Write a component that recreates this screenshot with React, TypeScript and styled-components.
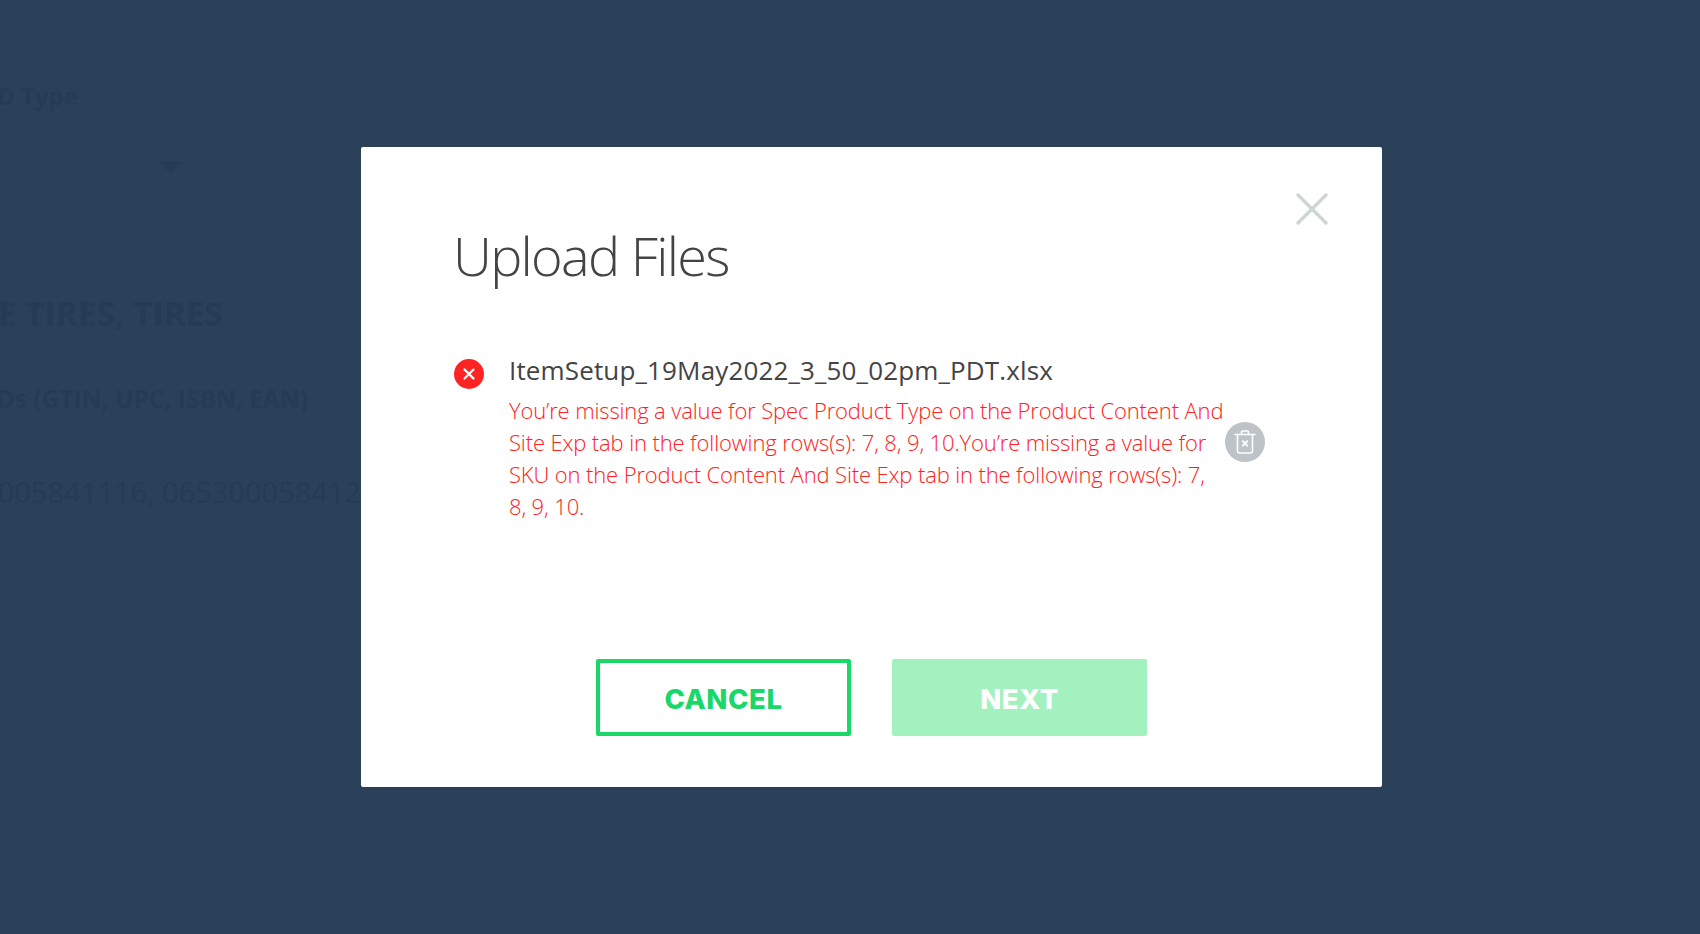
import React from 'react';
import styled, { createGlobalStyle } from 'styled-components';
import { X } from 'lucide-react';

const GlobalStyle = createGlobalStyle`
  html, body {
    margin: 0;
    padding: 0;
    height: 100%;
    overflow: hidden;
    background: #2b4159;
    font-family: "Open Sans", "Liberation Sans", sans-serif;
  }
`;

const Page = styled.div`
  position: relative;
  width: 1700px;
  height: 934px;
  overflow: hidden;
  background: #2b4159;
  color: #243c54;
`;

const PageContent = styled.div`
  display: flex;
  flex-direction: column;
  padding-top: 80px;
`;

const ClippedRow = styled.div<{ $end: number; $size: number; $weight: number; $top: number }>`
  display: flex;
  justify-content: flex-end;
  width: ${p => p.$end}px;
  margin-top: ${p => p.$top}px;
  font-size: ${p => p.$size}px;
  font-weight: ${p => p.$weight};
  line-height: 1.3;
  white-space: nowrap;
`;

const SelectBox = styled.div`
  display: flex;
  justify-content: flex-end;
  align-items: center;
  box-sizing: border-box;
  width: 201px;
  height: 80px;
  margin-top: 17px;
  padding-right: 16px;
  border-right: 1px solid #293f57;
  border-bottom: 1px solid #293f57;
`;

const Caret = styled.span`
  width: 0;
  height: 0;
  border-left: 13px solid transparent;
  border-right: 13px solid transparent;
  border-top: 13px solid #243c54;
`;

const FieldRule = styled.div`
  width: 361px;
  height: 1px;
  margin-top: 35px;
  background: #293f57;
`;

const ColumnEdge = styled.div`
  position: absolute;
  top: 0;
  bottom: 0;
  left: 1349px;
  width: 2px;
  background: #2a4058;
`;

const Overlay = styled.div`
  position: absolute;
  inset: 0;
  display: flex;
  justify-content: center;
  align-items: center;
  padding-left: 43px;
  box-sizing: border-box;
`;

const Modal = styled.div`
  position: relative;
  display: flex;
  flex-direction: column;
  box-sizing: border-box;
  width: 1021px;
  height: 640px;
  padding: 73px 92px 51px;
  background: #fff;
  border-radius: 2px;
`;

const CloseButton = styled.button`
  position: absolute;
  top: 46px;
  right: 54px;
  display: flex;
  padding: 0;
  border: 0;
  background: none;
  color: #cdd5d5;
  cursor: pointer;
`;

const Title = styled.h1`
  margin: 0;
  font-size: 54px;
  font-weight: 300;
  line-height: 70px;
  letter-spacing: -1.7px;
  color: #444;
`;

const FileRow = styled.div`
  display: flex;
  align-items: flex-start;
  margin-top: 64px;
`;

const ErrorBadge = styled.span`
  display: flex;
  align-items: center;
  justify-content: center;
  flex-shrink: 0;
  width: 30px;
  height: 30px;
  margin: 5px 0 0 1px;
  border-radius: 50%;
  background: #ff2424;
  color: #fff;
`;

const FileBody = styled.div`
  display: flex;
  flex-direction: column;
  width: 717px;
  margin-left: 25px;
`;

const FileName = styled.div`
  font-size: 26px;
  line-height: 32px;
  letter-spacing: 0.15px;
  white-space: nowrap;
  color: #444;
`;

const ErrorText = styled.div`
  margin-top: 8px;
  font-size: 22px;
  font-weight: 300;
  line-height: 32px;
  letter-spacing: -0.13px;
  white-space: nowrap;
  color: #ff2020;
`;

const TrashButton = styled.button`
  display: flex;
  align-items: center;
  justify-content: center;
  flex-shrink: 0;
  width: 40px;
  height: 40px;
  margin: 68px 0 0 -1px;
  padding: 0;
  border: 0;
  border-radius: 50%;
  background: #bec3c7;
  color: #fff;
  cursor: pointer;
`;

const Actions = styled.div`
  display: flex;
  justify-content: center;
  gap: 41px;
  margin-top: auto;
`;

const ActionButton = styled.button<{ $primary?: boolean }>`
  box-sizing: border-box;
  width: 255px;
  height: 77px;
  padding: 3px 0 0;
  border: ${p => (p.$primary ? '0' : '4px solid #19d868')};
  border-radius: 2px;
  background: ${p => (p.$primary ? '#a3f1bf' : '#fff')};
  color: ${p => (p.$primary ? '#fff' : '#19d868')};
  font-family: "Inter", "Open Sans", sans-serif;
  font-size: 27.5px;
  font-weight: 800;
  letter-spacing: 0.6px;
  cursor: pointer;
`;

const CloseIcon = () => (
  <svg width="32" height="32" viewBox="0 0 32 32" fill="none" stroke="currentColor" strokeWidth="3.4" strokeLinecap="round">
    <path d="M2 2 30 30M30 2 2 30" />
  </svg>
);

const TrashIcon = () => (
  <svg width="24" height="26" viewBox="0 0 24 26" fill="none" stroke="currentColor" strokeWidth="1.6" strokeLinecap="round" strokeLinejoin="round">
    <path d="M2 5.5h20" />
    <path d="M8.5 5.5V3a1 1 0 0 1 1-1h5a1 1 0 0 1 1 1v2.5" />
    <path d="M4.5 5.5V22a2 2 0 0 0 2 2h11a2 2 0 0 0 2-2V5.5" />
    <path d="M9.8 12.2l4.4 4.4M14.2 12.2l-4.4 4.4" strokeWidth="2" />
  </svg>
);

const App: React.FC = () => (
  <Page>
    <GlobalStyle />
    <PageContent>
      <ClippedRow $end={78} $size={24} $weight={700} $top={0}>ID Type</ClippedRow>
      <SelectBox>
        <Caret />
      </SelectBox>
      <ClippedRow $end={223} $size={33.5} $weight={700} $top={84}>E TIRES, TIRES</ClippedRow>
      <ClippedRow $end={308} $size={24.5} $weight={700} $top={47}>IDs (GTIN, UPC, ISBN, EAN)</ClippedRow>
      <FieldRule />
      <ClippedRow $end={361} $size={29} $weight={400} $top={22}>005841116, 065300058412</ClippedRow>
    </PageContent>
    <ColumnEdge />
    <Overlay>
      <Modal>
        <CloseButton aria-label="Close">
          <CloseIcon />
        </CloseButton>
        <Title>Upload Files</Title>
        <FileRow>
          <ErrorBadge>
            <X size={18} strokeWidth={3} />
          </ErrorBadge>
          <FileBody>
            <FileName>ItemSetup_19May2022_3_50_02pm_PDT.xlsx</FileName>
            <ErrorText>
              You’re missing a value for Spec Product Type on the Product Content And<br />
              Site Exp tab in the following rows(s): 7, 8, 9, 10.You’re missing a value for<br />
              SKU on the Product Content And Site Exp tab in the following rows(s): 7,<br />
              8, 9, 10.
            </ErrorText>
          </FileBody>
          <TrashButton aria-label="Remove file">
            <TrashIcon />
          </TrashButton>
        </FileRow>
        <Actions>
          <ActionButton>CANCEL</ActionButton>
          <ActionButton $primary>NEXT</ActionButton>
        </Actions>
      </Modal>
    </Overlay>
  </Page>
);

export default App;
